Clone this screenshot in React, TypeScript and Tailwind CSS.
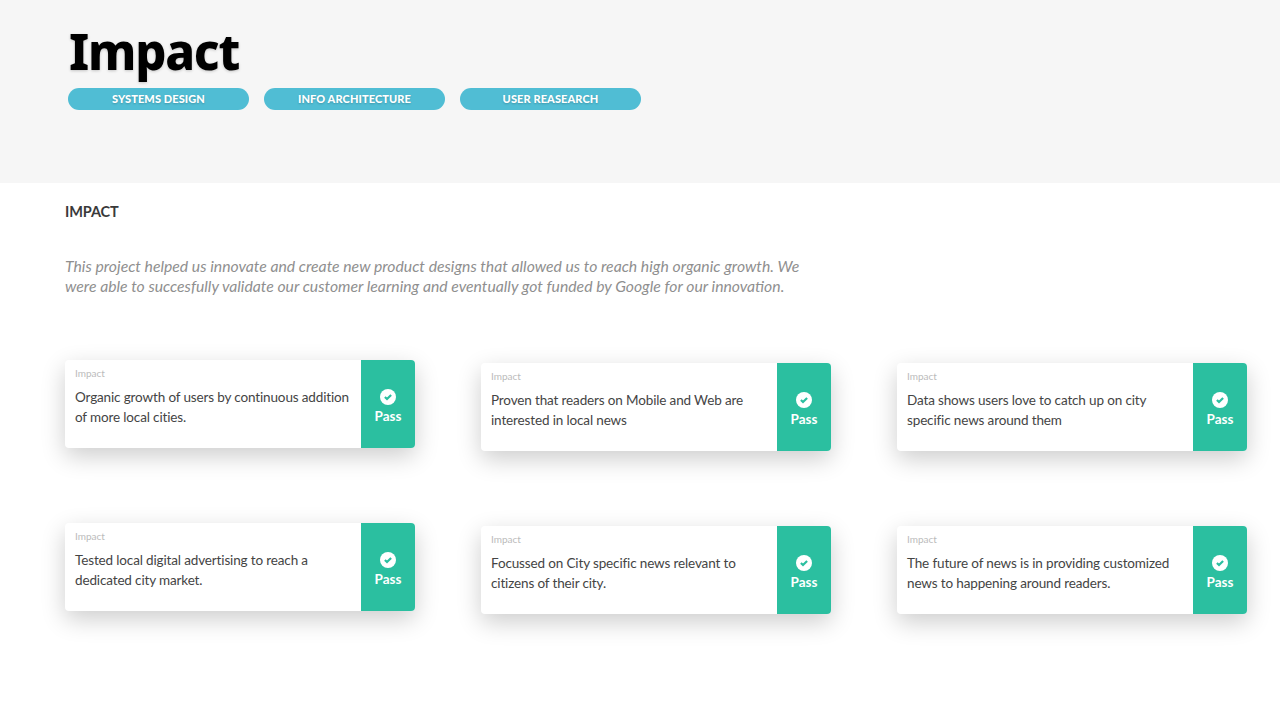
const pills = ["SYSTEMS DESIGN", "INFO ARCHITECTURE", "USER REASEARCH"];

const columns = [
  [
    "Organic growth of users by continuous addition of more local cities.",
    "Tested local digital advertising to reach a dedicated city market.",
  ],
  [
    "Proven that readers on Mobile and Web are interested in local news",
    "Focussed on City specific news relevant to citizens of their city.",
  ],
  [
    "Data shows users love to catch up on city specific news around them",
    "The future of news is in providing customized news to happening around readers.",
  ],
];

const Card = ({ text }: { text: string }) => {
  return (
    <div className="flex h-[88px] w-[350px] rounded-[4px] bg-white shadow-[0_8px_24px_rgba(0,0,0,0.2)]">
      <div className="w-[296px] pl-[10px] pr-[4px] pt-[7px]">
        <div className="text-[10px] leading-[12px] text-[#bbbbbb]">Impact</div>
        <p className="mt-[8px] text-[13.5px] leading-[20px] tracking-[-0.14px] text-[#444444]">{text}</p>
      </div>
      <div className="flex w-[54px] flex-col items-center rounded-r-[4px] bg-[#2bbfa0] pt-[29px] text-white">
        <svg className="h-[16px] w-[16px]" viewBox="0 0 16 16">
          <circle cx="8" cy="8" r="8" fill="#ffffff" />
          <path d="M4.9 8 7 10l4.1-4" fill="none" stroke="#2bbfa0" strokeWidth="2.2" />
        </svg>
        <div className="mt-[2px] text-[13.5px] font-bold leading-[18px]">Pass</div>
      </div>
    </div>
  );
};

const App = () => {
  return (
    <div className="h-[720px] w-[1280px] overflow-hidden bg-white font-['Lato',sans-serif]">
      <div className="h-[183px] bg-[#f6f6f6] pl-[68px] pt-[19px]">
        <h1 className="pl-[1px] font-['Noto_Sans',sans-serif] text-[49px] font-extrabold leading-[64px] tracking-[-1.2px] text-black [text-shadow:0_1px_3px_rgba(0,0,0,0.2)]">
          Impact
        </h1>
        <div className="mt-[5px] flex gap-[15px]">
          {pills.map((pill) => (
            <div
              key={pill}
              className="flex h-[22px] w-[181px] items-center justify-center rounded-[11px] bg-[#50bdd4] text-[11px] font-black tracking-[0.1px] text-white [text-shadow:0_1px_2px_rgba(0,0,0,0.2)]"
            >
              {pill}
            </div>
          ))}
        </div>
      </div>
      <div className="pl-[65px]">
        <h2 className="mt-[19px] text-[14.5px] font-bold leading-[20px] tracking-[-0.1px] text-[#3a3a3a]">IMPACT</h2>
        <p className="mt-[34px] w-[750px] text-[15.75px] italic leading-[20px] text-[#8f8f8f]">
          This project helped us innovate and create new product designs that allowed us to reach high organic growth. We
          were able to succesfully validate our customer learning and eventually got funded by Google for our innovation.
        </p>
        <div className="mt-[64px] flex gap-[66px]">
          {columns.map((cards, i) => (
            <div key={i} className={i === 0 ? "flex flex-col gap-[75px]" : "flex flex-col gap-[75px] pt-[3px]"}>
              {cards.map((text) => (
                <Card key={text} text={text} />
              ))}
            </div>
          ))}
        </div>
      </div>
    </div>
  );
};

export default App;
